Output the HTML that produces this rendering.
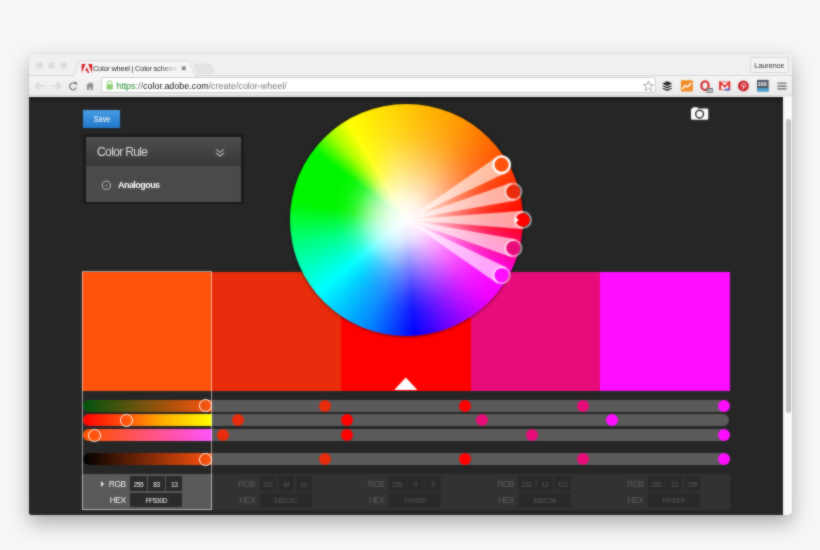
<!DOCTYPE html>
<html><head><meta charset="utf-8"><title>Color wheel</title>
<style>
html,body{margin:0;padding:0}
html{background:#f6f6f6}
body{width:820px;height:550px;background:#f6f6f6;position:relative;overflow:hidden;filter:url(#bl);font-family:"Liberation Sans",sans-serif}
.win{position:absolute;left:28.6px;top:54px;width:763.4px;height:461.3px;background:linear-gradient(#f0f0f0 0,#f0f0f0 43px,#262626 43px);border-radius:4px 4px 3px 3px;box-shadow:0 8px 20px rgba(0,0,0,.30),0 0 1.5px rgba(0,0,0,.14);overflow:hidden}
.abs{position:absolute}
.tabbar{position:absolute;left:0;top:0;width:100%;height:22px;background:#f0f0f0}
.toolbar{position:absolute;left:0;top:20.9px;width:100%;height:21.6px;background:linear-gradient(#f5f5f5,#eaeaea);border-top:1px solid #d6d6d6;box-sizing:border-box;border-bottom:1px solid #dcdcdc}
.content{position:absolute;left:0;top:42.5px;width:754.6px;height:420px;background:#262626;box-shadow:inset 0 4px 3px -1px #161616}
.scroll{position:absolute;left:754.6px;top:42.5px;width:9px;height:420px;background:#fafafa}
.thumb{position:absolute;left:757.2px;top:64.6px;width:4.8px;height:294.4px;border-radius:2.4px;background:#c2c2c2}
.tl{position:absolute;top:7.7px;width:7px;height:7px;border-radius:50%;background:#dddddd}
.track{position:absolute;left:83.1px;width:646.4px;height:12px;border-radius:6px;background:#5a5a5a}
.grad{position:absolute;left:83.1px;width:128.6px;height:12px;border-radius:6px 0 0 6px}
.dot{position:absolute;width:12px;height:12px;border-radius:50%}
.hand{position:absolute;width:13px;height:13px;border-radius:50%;box-sizing:border-box;border:1px solid #fff;background:transparent}
.info{position:absolute;top:474.3px;width:129.5px;height:35.7px;background:#323232;color:#5e5e5e;font-size:8.5px}
.info.sel{background:#595959;color:#f0f0f0}
.info .lab{position:absolute;left:0;width:43.3px;text-align:right;height:14.5px;line-height:15px;letter-spacing:-0.6px}
.info .fld{position:absolute;height:14.2px;line-height:17.2px;background:#292929;color:#5a5a5a;font-size:6.6px;text-align:center;letter-spacing:-0.35px}
.info.sel .fld{background:#2a2a2a;color:#f4f4f4}
.tri{position:absolute;left:18.4px;top:6.3px;width:0;height:0;border-left:3.5px solid #f0f0f0;border-top:3px solid transparent;border-bottom:3px solid transparent}
</style></head><body>
<svg width="0" height="0" style="position:absolute"><filter id="bl" x="0" y="0" width="100%" height="100%" color-interpolation-filters="sRGB"><feGaussianBlur stdDeviation="0.8" result="b"/><feComposite in="SourceGraphic" in2="b" operator="arithmetic" k1="0" k2="0.45" k3="0.55" k4="0"/></filter></svg>
<div class="win">
 <div class="tabbar"></div>
 <div class="toolbar"></div>
 <div class="tl" style="left:7.1px"></div><div class="tl" style="left:19.2px"></div><div class="tl" style="left:31.3px"></div>
 <svg class="abs" style="left:40px;top:0" width="190" height="23" viewBox="0 0 190 23">
  <path d="M1.9,22 C5.4,22 5.9,20 6.9,17 L9.4,9.5 C10.2,7.3 10.9,6.9 12.9,6.9 L118,6.9 C120,6.9 120.7,7.3 121.5,9.5 L124,17 C125,20 125.5,22 129,22 L129,22.4 L1.9,22.4 Z" fill="#f5f5f5"/>
  <path d="M1.9,22 C5.4,22 5.9,20 6.9,17 L9.4,9.5 C10.2,7.3 10.9,6.9 12.9,6.9 L118,6.9 C120,6.9 120.7,7.3 121.5,9.5 L124,17 C125,20 125.5,22 129,22" fill="none" stroke="#d4d4d4" stroke-width="0.8"/>
  <path d="M126.5,10.2 L140.6,10.2 C141.6,10.2 142,10.6 142.4,11.6 L144.6,17.6 C144.9,18.6 144.6,19 143.6,19 L129.5,19 C128.5,19 128.1,18.6 127.7,17.6 L125.5,11.6 C125.2,10.6 125.5,10.2 126.5,10.2 Z" fill="#e5e5e5" stroke="#d4d4d4" stroke-width="0.7"/>
  <g fill="#d8161e"><polygon points="12.70,9.90 16.55,9.90 12.70,18.90"/><polygon points="19.25,9.90 23.10,9.90 23.10,18.90"/><polygon points="17.90,13.21 20.33,18.90 18.72,18.90 17.99,17.12 16.21,17.12"/></g>
  <path d="M112.9,12.3 L116.7,16.1 M116.7,12.3 L112.9,16.1" stroke="#555" stroke-width="1.1" fill="none"/>
 </svg>
 <div class="abs" style="left:64.3px;top:9.6px;width:86px;height:10px;line-height:10px;font-size:7.5px;letter-spacing:-0.25px;color:#2a2a2a;white-space:nowrap;overflow:hidden;-webkit-mask-image:linear-gradient(90deg,#000 78%,transparent 100%);mask-image:linear-gradient(90deg,#000 78%,transparent 100%)">Color wheel | Color scheme</div>
 <div class="abs" style="left:721px;top:2.8px;width:39.3px;height:16px;box-sizing:border-box;border:1px solid #d6d6d6;border-radius:2px;background:#f4f4f4;font-size:7.2px;line-height:15.8px;text-align:center;color:#262626">Laurence</div>
 <!-- nav icons -->
 <svg class="abs" style="left:0;top:22px" width="80" height="21" viewBox="0 0 80 21">
  <path d="M6.8,10 H15.2 M10.6,6.2 L6.8,10 L10.6,13.8" stroke="#d6d6d6" stroke-width="1.7" fill="none"/>
  <path d="M31.2,10 H22.8 M27.4,6.2 L31.2,10 L27.4,13.8" stroke="#d6d6d6" stroke-width="1.7" fill="none"/>
  <path d="M46.6,8 A3.4,3.4 0 1 0 47.3,11.5" stroke="#757575" stroke-width="1.3" fill="none"/>
  <path d="M44.6,6.1 L47.9,6.1 L47.9,9.4 Z" fill="#757575"/>
  <path d="M56.9,10.2 L60.9,6.2 L64.9,10.2 L63.8,10.2 L63.8,13.9 L61.7,13.9 L61.7,11.2 L60.1,11.2 L60.1,13.9 L58,13.9 L58,10.2 Z" fill="#8a8a8a"/>
  <rect x="62.7" y="6.6" width="1.1" height="2.4" fill="#8a8a8a"/>
 </svg>
 <!-- url bar -->
 <div class="abs" style="left:72.4px;top:23.3px;width:554.6px;height:15.7px;box-sizing:border-box;border:1px solid #cdcdcd;border-radius:2px;background:#fff"></div>
 <svg class="abs" style="left:76px;top:25px" width="10" height="13" viewBox="0 0 10 13">
  <path d="M2.7,5.5 V3.9 A2,2 0 0 1 6.7,3.9 V5.5" stroke="#a5d690" stroke-width="1.1" fill="none"/>
  <rect x="1.5" y="5.2" width="6.4" height="5.2" rx="0.8" fill="#8ccd6e"/>
 </svg>
 <div class="abs" style="left:87.6px;top:25.6px;height:12px;line-height:12px;font-size:8.95px;white-space:nowrap;color:#777"><span style="color:#1f8a2a">https</span>://<span style="color:#111">color.adobe.com</span>/create/color-wheel/</div>
 <!-- right icons -->
 <svg class="abs" style="left:608px;top:22px" width="156" height="21" viewBox="0 0 156 21">
  <path d="M11.400,5.000 L12.693,8.620 L16.535,8.731 L13.492,11.080 L14.574,14.769 L11.400,12.600 L8.226,14.769 L9.308,11.080 L6.265,8.731 L10.107,8.620 Z" fill="#fff" stroke="#8a8a8a" stroke-width="0.7"/>
  <g fill="#222"><path d="M30.200,5.200 L35.200,7.600 L30.200,10.000 L25.200,7.600 Z"/><path d="M26.6,9.4 L25.2,10.1 L30.2,12.500 L35.2,10.100 L33.8,9.4 L30.2,11.100 Z"/><path d="M26.6,11.900 L25.2,12.600 L30.2,15.000 L35.2,12.600 L33.8,11.9 L30.2,13.600 Z"/></g>
  <rect x="43.9" y="4.3" width="12" height="11.2" rx="1" fill="#f08a24"/>
  <path d="M45.2,13 L48,9.4 L50.4,11 L54.4,7" stroke="#fff" stroke-width="1.5" fill="none"/>
  <ellipse cx="68" cy="9.600" rx="3.600" ry="4.400" fill="none" stroke="#d81e1e" stroke-width="2"/>
  <rect x="69.4" y="12" width="6.4" height="4.8" rx="0.6" fill="#666"/><text x="72.6" y="15.9" font-size="4.2" font-weight="bold" fill="#fff" text-anchor="middle" font-family="Liberation Sans, sans-serif">28</text>
  <rect x="82.5" y="6" width="10.400" height="7.8" fill="#fff" stroke="#d33" stroke-width="0.8"/>
  <path d="M83.3,13.6 L83.3,6.6 L87.7,10.6 L92.1,6.6 L92.1,13.6" stroke="#d22" stroke-width="1.6" fill="none"/>
  <rect x="88" y="12.6" width="4.6" height="2" fill="#3a6fd0"/>
  <circle cx="106.4" cy="10" r="5.4" fill="#cb2027"/>
  <path d="M105.8,13.600 L106.7,9.000 M104.600,10.600 C103.800,9.000 105.000,7.200 106.700,7.200 C108.4,7.200 109.200,8.800 108.700,10.200 C108.300,11.500 107.100,11.700 106.600,10.900" stroke="#fff" stroke-width="1" fill="none"/>
  <rect x="120" y="3.9" width="11.6" height="11.6" fill="#4d5862"/>
  <rect x="120" y="12.2" width="11.6" height="3.3" fill="#4aa3d2"/>
  <path d="M140.4,7.300 H149.6 M140.4,10.100 H149.6 M140.4,12.900 H149.6" stroke="#858585" stroke-width="1.6"/>
 </svg>
 <div class="abs" style="left:727.4px;top:27.6px;width:12px;text-align:center;font-size:5.8px;font-weight:bold;color:#fff;line-height:5px;letter-spacing:-0.2px">100</div>
 <div class="content"></div>
 <div class="scroll"></div><div class="thumb"></div>
</div>

<!-- page content in absolute page coordinates -->
<div class="abs" style="left:82.7px;top:110px;width:37.7px;height:17.6px;background:linear-gradient(#469de3,#2278cc);color:#fff;font-size:8.8px;line-height:19.6px;text-align:center"><span style="display:inline-block;transform:scaleX(.83)">Save</span></div>

<div class="abs" style="left:82.6px;top:134.4px;width:161px;height:69.7px;background:#1b1b1b"></div>
<div class="abs" style="left:85.5px;top:137.1px;width:155.6px;height:29.4px;background:linear-gradient(#4d4d4d,#383838)"></div>
<div class="abs" style="left:85.5px;top:166.2px;width:155.6px;height:35.4px;background:#4a4a4a"></div>
<div class="abs" style="left:97px;top:144px;font-size:12.2px;line-height:16px;color:#dcdcdc;letter-spacing:-0.72px;white-space:nowrap">Color Rule</div>
<svg class="abs" style="left:214px;top:146.5px" width="12" height="12" viewBox="0 0 12 12"><path d="M2,2.4 L6,5.4 L10,2.4 M2,6 L6,9 L10,6" stroke="#bdbdbd" stroke-width="1.1" fill="none"/></svg>
<svg class="abs" style="left:100px;top:179px" width="13" height="13" viewBox="0 0 13 13"><circle cx="6.4" cy="6.3" r="4.1" stroke="#cfcfcf" stroke-width="0.9" fill="none"/><circle cx="6.4" cy="6.3" r="0.8" fill="#cfcfcf"/></svg>
<div class="abs" style="left:118px;top:179px;font-size:9px;line-height:13px;color:#fff;font-weight:bold;letter-spacing:-0.55px;white-space:nowrap">Analogous</div>

<!-- camera -->
<svg class="abs" style="left:690px;top:106px" width="20" height="15" viewBox="0 0 20 15"><path d="M2.2,2.4 L3.2,1.2 L7.2,1.2 L8.2,2.4 L17.1,2.4 Q18.3,2.4 18.3,3.6 L18.3,12.6 Q18.3,13.8 17.1,13.8 L2.2,13.8 Q1,13.8 1,12.6 L1,3.6 Q1,2.4 2.2,2.4 Z" fill="#fff"/><circle cx="9.6" cy="8.05" r="3.9" fill="none" stroke="#2c2c2c" stroke-width="1.45"/></svg>

<div style="position:absolute;left:82.2px;top:271.6px;width:129.8px;height:119.2px;background:#ff530d"></div>
<div style="position:absolute;left:211.7px;top:271.6px;width:129.8px;height:119.2px;background:#e82c0c"></div>
<div style="position:absolute;left:341.1px;top:271.6px;width:129.8px;height:119.2px;background:#ff0000"></div>
<div style="position:absolute;left:470.6px;top:271.6px;width:129.8px;height:119.2px;background:#e80c7a"></div>
<div style="position:absolute;left:600.0px;top:271.6px;width:129.8px;height:119.2px;background:#ff0dff"></div>
<!-- white triangle -->
<svg class="abs" style="left:392px;top:373.7px" width="30" height="17" viewBox="0 0 30 17"><polygon points="2.2,16 13.8,3.4 25.4,16" fill="#fff"/></svg>

<!-- wheel -->
<div class="abs" style="left:289.6px;top:103.8px;width:233.4px;height:232.2px;border-radius:50%;box-shadow:0 0 3px 1px rgba(0,0,0,.45);background:radial-gradient(circle closest-side,#fff 0%,rgba(255,255,255,.9) 15%,rgba(255,255,255,.75) 25%,rgba(255,255,255,.5) 35%,rgba(255,255,255,.2) 45%,rgba(255,255,255,.05) 55%,rgba(255,255,255,0) 65%),conic-gradient(from 90deg,#f00 0deg,#f0f 30deg,#ec00ff 45deg,#b000ff 57deg,#7000ff 68deg,#00f 86deg,#0080ff 108deg,#0ff 141deg,#00ff80 168deg,#00f600 189deg,#00f600 217deg,#a8ff00 229deg,#ff0 239deg,#ff9500 300deg,#f00 360deg)"></div>
<div class="abs" style="left:289.6px;top:103.8px;width:233.4px;height:232.2px;border-radius:50%;background:radial-gradient(circle closest-side,rgba(255,255,255,0) 25%,rgba(255,255,255,.2) 35%,rgba(255,255,255,.3) 45%,rgba(255,255,255,.27) 55%,rgba(255,255,255,.19) 65%,rgba(255,255,255,.1) 75%,rgba(255,255,255,.03) 90%,rgba(255,255,255,0) 100%);-webkit-mask-image:conic-gradient(from 90deg,#000 0deg,#000 92deg,transparent 132deg,transparent 228deg,#000 258deg,#000 360deg);mask-image:conic-gradient(from 90deg,#000 0deg,#000 92deg,transparent 132deg,transparent 228deg,#000 258deg,#000 360deg)"></div>
<svg class="abs" style="left:0;top:0" width="820" height="550" viewBox="0 0 820 550">
<polygon points="406.3,219.8 506.2,172.7 497.0,156.7" fill="#fff" fill-opacity="0.62"/>
<polygon points="406.3,219.8 515.6,200.6 511.0,182.8" fill="#fff" fill-opacity="0.62"/>
<polygon points="406.3,219.8 522.8,229.1 522.8,210.7" fill="#fff" fill-opacity="0.62"/>
<polygon points="406.3,219.8 510.9,257.0 515.7,239.2" fill="#fff" fill-opacity="0.62"/>
<polygon points="406.3,219.8 497.0,283.2 506.2,267.2" fill="#fff" fill-opacity="0.62"/>
<circle cx="501.6" cy="164.7" r="8.3" fill="#ff530d" stroke="#fff" stroke-width="2.4"/>
<circle cx="513.3" cy="191.7" r="8.0" fill="none" stroke="#fff" stroke-opacity="0.5" stroke-width="2.3"/><circle cx="513.3" cy="191.7" r="7" fill="#e82c0c"/>
<circle cx="522.8" cy="219.9" r="8.0" fill="none" stroke="#fff" stroke-opacity="0.5" stroke-width="2.3"/><circle cx="522.8" cy="219.9" r="7" fill="#ff0000"/>
<circle cx="513.3" cy="248.1" r="8.0" fill="none" stroke="#fff" stroke-opacity="0.5" stroke-width="2.3"/><circle cx="513.3" cy="248.1" r="7" fill="#e80c7a"/>
<circle cx="501.6" cy="275.2" r="8.0" fill="none" stroke="#fff" stroke-opacity="0.5" stroke-width="2.3"/><circle cx="501.6" cy="275.2" r="7" fill="#ff0dff"/>
<polygon points="514.8,216.6 518.9,219.9 514.8,223.2" fill="#fff"/>
</svg>

<div class="track" style="top:399.7px"></div>
<div class="track" style="top:414.0px"></div>
<div class="track" style="top:429.2px"></div>
<div class="track" style="top:453.3px"></div>
<div class="grad" style="top:399.7px;background:linear-gradient(90deg,#00530d,#ff530d)"></div>
<div class="grad" style="top:414.0px;background:linear-gradient(90deg,#ff0000,#ff530d 33%,#ffa800 60%,#ffff00)"></div>
<div class="grad" style="top:429.2px;background:linear-gradient(90deg,#ff5300 0%,#ff530d 10%,#ff53ff 100%)"></div>
<div class="grad" style="top:453.3px;background:linear-gradient(90deg,#000000,#ff530d)"></div>
<div class="dot" style="left:318.7px;top:399.7px;background:#e82c0c"></div>
<div class="dot" style="left:232.1px;top:414.0px;background:#e82c0c"></div>
<div class="dot" style="left:217.3px;top:429.2px;background:#e82c0c"></div>
<div class="dot" style="left:318.7px;top:453.3px;background:#e82c0c"></div>
<div class="dot" style="left:459.0px;top:399.7px;background:#ff0000"></div>
<div class="dot" style="left:341.1px;top:414.0px;background:#ff0000"></div>
<div class="dot" style="left:341.1px;top:429.2px;background:#ff0000"></div>
<div class="dot" style="left:459.0px;top:453.3px;background:#ff0000"></div>
<div class="dot" style="left:577.2px;top:399.7px;background:#e80c7a"></div>
<div class="dot" style="left:475.6px;top:414.0px;background:#e80c7a"></div>
<div class="dot" style="left:526.1px;top:429.2px;background:#e80c7a"></div>
<div class="dot" style="left:577.2px;top:453.3px;background:#e80c7a"></div>
<div class="dot" style="left:717.5px;top:399.7px;background:#ff0dff"></div>
<div class="dot" style="left:606.1px;top:414.0px;background:#ff0dff"></div>
<div class="dot" style="left:717.5px;top:429.2px;background:#ff0dff"></div>
<div class="dot" style="left:717.5px;top:453.3px;background:#ff0dff"></div>
<div class="hand" style="left:199.2px;top:399.2px;"></div>
<div class="hand" style="left:119.9px;top:413.5px;"></div>
<div class="hand" style="left:88.3px;top:428.7px;"></div>
<div class="hand" style="left:199.2px;top:452.8px;"></div>
<div class="info sel" style="left:82.2px"><div class="tri"></div>
<span class="lab" style="top:2.6px">RGB</span><span class="lab" style="top:18.6px">HEX</span>
<span class="fld" style="left:47.9px;top:2.2px;width:16.7px">255</span><span class="fld" style="left:66.1px;top:2.2px;width:16.4px">83</span><span class="fld" style="left:84.1px;top:2.2px;width:16.2px">13</span>
<span class="fld" style="left:47.9px;top:18.8px;width:52.4px;height:13.8px;line-height:15.6px">FF530D</span></div>
<div class="info" style="left:211.7px">
<span class="lab" style="top:2.6px">RGB</span><span class="lab" style="top:18.6px">HEX</span>
<span class="fld" style="left:47.9px;top:2.2px;width:16.7px">232</span><span class="fld" style="left:66.1px;top:2.2px;width:16.4px">44</span><span class="fld" style="left:84.1px;top:2.2px;width:16.2px">12</span>
<span class="fld" style="left:47.9px;top:18.8px;width:52.4px;height:13.8px;line-height:15.6px">E82C0C</span></div>
<div class="info" style="left:341.1px">
<span class="lab" style="top:2.6px">RGB</span><span class="lab" style="top:18.6px">HEX</span>
<span class="fld" style="left:47.9px;top:2.2px;width:16.7px">255</span><span class="fld" style="left:66.1px;top:2.2px;width:16.4px">0</span><span class="fld" style="left:84.1px;top:2.2px;width:16.2px">0</span>
<span class="fld" style="left:47.9px;top:18.8px;width:52.4px;height:13.8px;line-height:15.6px">FF0000</span></div>
<div class="info" style="left:470.6px">
<span class="lab" style="top:2.6px">RGB</span><span class="lab" style="top:18.6px">HEX</span>
<span class="fld" style="left:47.9px;top:2.2px;width:16.7px">232</span><span class="fld" style="left:66.1px;top:2.2px;width:16.4px">12</span><span class="fld" style="left:84.1px;top:2.2px;width:16.2px">122</span>
<span class="fld" style="left:47.9px;top:18.8px;width:52.4px;height:13.8px;line-height:15.6px">E80C7A</span></div>
<div class="info" style="left:600.0px">
<span class="lab" style="top:2.6px">RGB</span><span class="lab" style="top:18.6px">HEX</span>
<span class="fld" style="left:47.9px;top:2.2px;width:16.7px">255</span><span class="fld" style="left:66.1px;top:2.2px;width:16.4px">13</span><span class="fld" style="left:84.1px;top:2.2px;width:16.2px">255</span>
<span class="fld" style="left:47.9px;top:18.8px;width:52.4px;height:13.8px;line-height:15.6px">FF0DFF</span></div>
<div class="abs" style="left:81.7px;top:271.1px;width:130.6px;height:239.1px;box-sizing:border-box;border:1px solid rgba(255,255,255,.55)"></div>
</body></html>
